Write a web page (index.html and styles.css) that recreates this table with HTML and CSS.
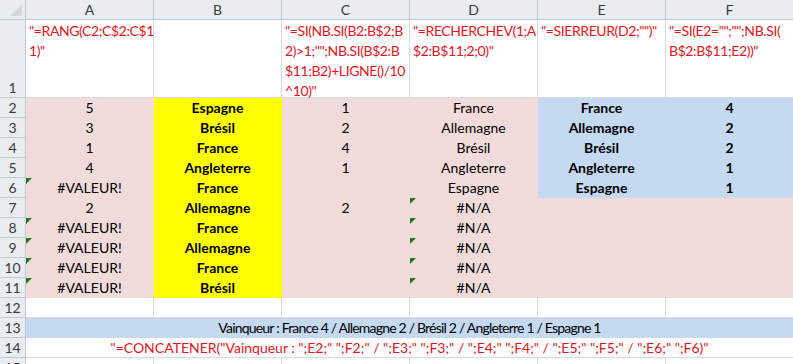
FILE: index.html
```html
<!DOCTYPE html>
<html lang="fr">
<head>
<meta charset="utf-8">
<title>Feuille</title>
<link rel="stylesheet" href="styles.css">
</head>
<body>
<div class="sheet">
  <div class="corner"><span class="corner-tri"></span></div>
  <div class="ch">A</div><div class="ch">B</div><div class="ch">C</div><div class="ch">D</div><div class="ch">E</div><div class="ch">F</div>

  <div class="rh rh-tall">1</div>
  <div class="c f">"=RANG(C2;C$2:C$1<br>1)"</div>
  <div class="c"></div>
  <div class="c f">"=SI(NB.SI(B2:B$2;B<br>2)&gt;1;"";NB.SI(B$2:B<br>$11;B2)+LIGNE()/10<br>^10)"</div>
  <div class="c f">"=RECHERCHEV(1;A<br>$2:B$11;2;0)"</div>
  <div class="c f">"=SIERREUR(D2;"")"</div>
  <div class="c f">"=SI(E2="";"";NB.SI(<br>B$2:B$11;E2))"</div>

  <div class="rh">2</div>
  <div class="c p">5</div><div class="c y b">Espagne</div><div class="c p">1</div><div class="c p">France</div><div class="c bl b">France</div><div class="c bl b">4</div>
  <div class="rh">3</div>
  <div class="c p">3</div><div class="c y b">Brésil</div><div class="c p">2</div><div class="c p">Allemagne</div><div class="c bl b">Allemagne</div><div class="c bl b">2</div>
  <div class="rh">4</div>
  <div class="c p">1</div><div class="c y b">France</div><div class="c p">4</div><div class="c p">Brésil</div><div class="c bl b">Brésil</div><div class="c bl b">2</div>
  <div class="rh">5</div>
  <div class="c p">4</div><div class="c y b">Angleterre</div><div class="c p">1</div><div class="c p">Angleterre</div><div class="c bl b">Angleterre</div><div class="c bl b">1</div>
  <div class="rh">6</div>
  <div class="c p warn">#VALEUR!</div><div class="c y b">France</div><div class="c p"></div><div class="c p">Espagne</div><div class="c bl b">Espagne</div><div class="c bl b">1</div>
  <div class="rh">7</div>
  <div class="c p">2</div><div class="c y b">Allemagne</div><div class="c p">2</div><div class="c p warn">#N/A</div><div class="c p"></div><div class="c p"></div>
  <div class="rh">8</div>
  <div class="c p warn">#VALEUR!</div><div class="c y b">France</div><div class="c p"></div><div class="c p warn">#N/A</div><div class="c p"></div><div class="c p"></div>
  <div class="rh">9</div>
  <div class="c p warn">#VALEUR!</div><div class="c y b">Allemagne</div><div class="c p"></div><div class="c p warn">#N/A</div><div class="c p"></div><div class="c p"></div>
  <div class="rh">10</div>
  <div class="c p warn">#VALEUR!</div><div class="c y b">France</div><div class="c p"></div><div class="c p warn">#N/A</div><div class="c p"></div><div class="c p"></div>
  <div class="rh">11</div>
  <div class="c p warn">#VALEUR!</div><div class="c y b">Brésil</div><div class="c p"></div><div class="c p warn">#N/A</div><div class="c p"></div><div class="c p"></div>

  <div class="rh">12</div>
  <div class="c"></div><div class="c"></div><div class="c"></div><div class="c"></div><div class="c"></div><div class="c"></div>
  <div class="rh">13</div>
  <div class="c bl merged tight">Vainqueur : France 4 / Allemagne 2 / Brésil 2 / Angleterre 1 / Espagne 1</div>
  <div class="rh">14</div>
  <div class="c merged red">"=CONCATENER("Vainqueur : ";E2;" ";F2;" / ";E3;" ";F3;" / ";E4;" ";F4;" / ";E5;" ";F5;" / ";E6;" ";F6)"</div>
  <div class="rh">15</div>
  <div class="c"></div><div class="c"></div><div class="c"></div><div class="c"></div><div class="c"></div><div class="c"></div>
</div>
</body>
</html>
```
FILE: styles.css
```css
html, body {
  margin: 0;
  padding: 0;
  background: #ffffff;
  overflow: hidden;
}
.sheet {
  display: grid;
  grid-template-columns: 26px repeat(6, 128px);
  grid-template-rows: 20px 78px repeat(14, 20px);
  font-family: Lato, "Liberation Sans", sans-serif;
  font-size: 14px;
  color: #000;
}
.corner, .ch, .rh {
  background: #e9edf2;
  border-right: 1px solid #c3c9d1;
  border-bottom: 1px solid #c3c9d1;
  color: #3a3a3a;
  box-sizing: border-box;
}
.corner {
  position: relative;
}
.corner-tri {
  position: absolute;
  right: 3px;
  bottom: 3px;
  width: 0;
  height: 0;
  border-left: 12px solid transparent;
  border-bottom: 12px solid #d3d8df;
}
.ch {
  display: flex;
  align-items: center;
  justify-content: center;
  font-size: 14px;
}
.rh {
  display: flex;
  align-items: center;
  justify-content: center;
  font-size: 14px;
  line-height: 19px;
}
.rh-tall {
  align-items: flex-end;
}
.c {
  box-sizing: border-box;
  border-right: 1px solid #d6d9de;
  border-bottom: 1px solid #d6d9de;
  display: flex;
  align-items: center;
  justify-content: center;
  white-space: nowrap;
  position: relative;
  line-height: 19px;
}
.f {
  display: block;
  color: #e8131b;
  padding: 1px 0 0 3px;
  line-height: 20px;
  letter-spacing: -0.4px;
}
.p {
  background: #f2dcdb;
  border-color: #f2dcdb;
}
.y {
  background: #ffff00;
  border-color: #ffff00;
}
.bl {
  background: #c5d9f1;
  border-color: #c5d9f1;
}
.b {
  font-weight: bold;
}
.merged {
  grid-column: span 6;
}
.tight {
  letter-spacing: -0.8px;
}
.red {
  color: #e8131b;
}
.warn::before {
  content: "";
  position: absolute;
  left: 0;
  top: 0;
  width: 0;
  height: 0;
  border-top: 6px solid #1f7a1f;
  border-right: 6px solid transparent;
}
```
